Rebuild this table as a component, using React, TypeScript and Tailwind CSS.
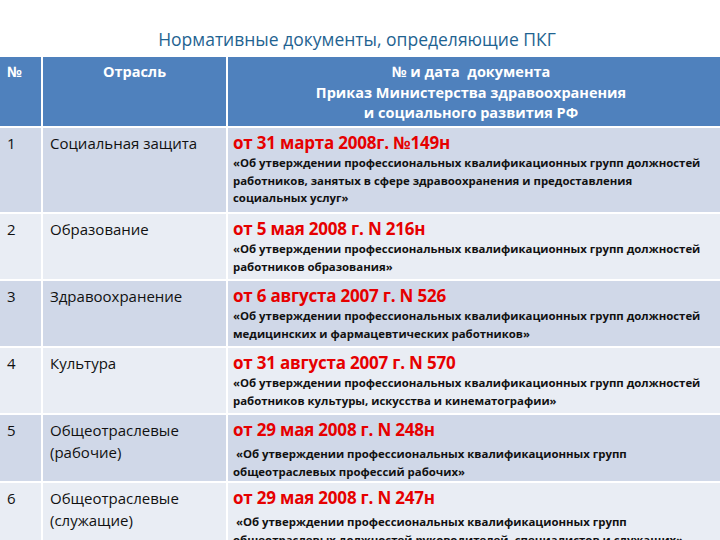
import React from "react";

type Row = {
  n: string;
  branch: string[];
  doc: string;
  desc: string[];
  extra?: boolean;
  h: string;
  bg: string;
};

const rows: Row[] = [
  {
    n: "1",
    branch: ["Социальная защита"],
    doc: "от 31 марта 2008г. №149н",
    desc: [
      "«Об утверждении профессиональных квалификационных групп должностей",
      "работников, занятых в сфере здравоохранения и предоставления",
      "социальных услуг»",
    ],
    h: "h-[84px]",
    bg: "bg-[#d0d8e8]",
  },
  {
    n: "2",
    branch: ["Образование"],
    doc: "от 5 мая 2008 г. N 216н",
    desc: [
      "«Об утверждении профессиональных квалификационных групп должностей",
      "работников образования»",
    ],
    h: "h-[65px]",
    bg: "bg-[#e9edf4]",
  },
  {
    n: "3",
    branch: ["Здравоохранение"],
    doc: "от 6 августа 2007 г. N 526",
    desc: [
      "«Об утверждении профессиональных квалификационных групп должностей",
      "медицинских и фармацевтических работников»",
    ],
    h: "h-[65px]",
    bg: "bg-[#d0d8e8]",
  },
  {
    n: "4",
    branch: ["Культура"],
    doc: "от 31 августа 2007 г. N 570",
    desc: [
      "«Об утверждении профессиональных квалификационных групп должностей",
      "работников культуры, искусства и кинематографии»",
    ],
    h: "h-[65px]",
    bg: "bg-[#e9edf4]",
  },
  {
    n: "5",
    branch: ["Общеотраслевые", "(рабочие)"],
    doc: "от 29 мая 2008 г. N 248н",
    desc: [
      "\u00a0«Об утверждении профессиональных квалификационных групп",
      "общеотраслевых профессий рабочих»",
    ],
    extra: true,
    h: "h-[66px]",
    bg: "bg-[#d0d8e8]",
  },
  {
    n: "6",
    branch: ["Общеотраслевые", "(служащие)"],
    doc: "от 29 мая 2008 г. N 247н",
    desc: [
      "\u00a0«Об утверждении профессиональных квалификационных групп",
      "общеотраслевых должностей руководителей, специалистов и служащих»",
    ],
    extra: true,
    h: "h-[80px]",
    bg: "bg-[#e9edf4]",
  },
];

export default function App() {
  return (
    <div
      className="w-[720px] h-[540px] overflow-hidden bg-white"
      style={{ fontFamily: '"Open Sans", "Noto Sans", sans-serif' }}
    >
      <div className="h-[57px] pt-[28px] text-center text-[17.5px] leading-[22px] text-[#1f6391] pr-[6px]">
        Нормативные документы, определяющие ПКГ
      </div>
      <div className="flex flex-col gap-y-[2px]">
        <div className="grid grid-cols-[41px_183px_1fr] gap-x-[2px] h-[69px]">
          <div className="bg-[#4f81bd] text-white font-bold text-[14.5px] leading-[20px] pt-[5px] pl-[7px]">
            №
          </div>
          <div className="bg-[#4f81bd] text-white font-bold text-[14.5px] leading-[20px] pt-[5px] text-center">
            Отрасль
          </div>
          <div className="bg-[#4f81bd] text-white font-bold text-[14.5px] leading-[20.5px] pt-[5px] text-center pr-[6px]">
            <div>№ и дата&nbsp; документа</div>
            <div>Приказ Министерства здравоохранения</div>
            <div>и социального развития РФ</div>
          </div>
        </div>
        {rows.map((r) => (
          <div
            key={r.n}
            className={`grid grid-cols-[41px_183px_1fr] gap-x-[2px] ${r.h}`}
          >
            <div className={`${r.bg} text-[15px] leading-[21px] text-[#111] pt-[5px] pl-[7px]`}>
              {r.n}
            </div>
            <div className={`${r.bg} text-[15px] leading-[21.5px] text-[#111] pt-[5px] pl-[7px]`}>
              {r.branch.map((b) => (
                <div key={b}>{b}</div>
              ))}
            </div>
            <div className={`${r.bg} pt-[4px] pl-[5px]`}>
              <div className="text-[17px] leading-[21px] font-bold text-[#e60000] tracking-[-0.2px]">
                {r.doc}
              </div>
              <div
                className={`text-[11.4px] leading-[17.5px] font-bold text-[#111] whitespace-nowrap ${
                  r.extra ? "mt-[5px]" : "mt-[1px]"
                }`}
              >
                {r.desc.map((d) => (
                  <div key={d}>{d}</div>
                ))}
              </div>
            </div>
          </div>
        ))}
      </div>
    </div>
  );
}
